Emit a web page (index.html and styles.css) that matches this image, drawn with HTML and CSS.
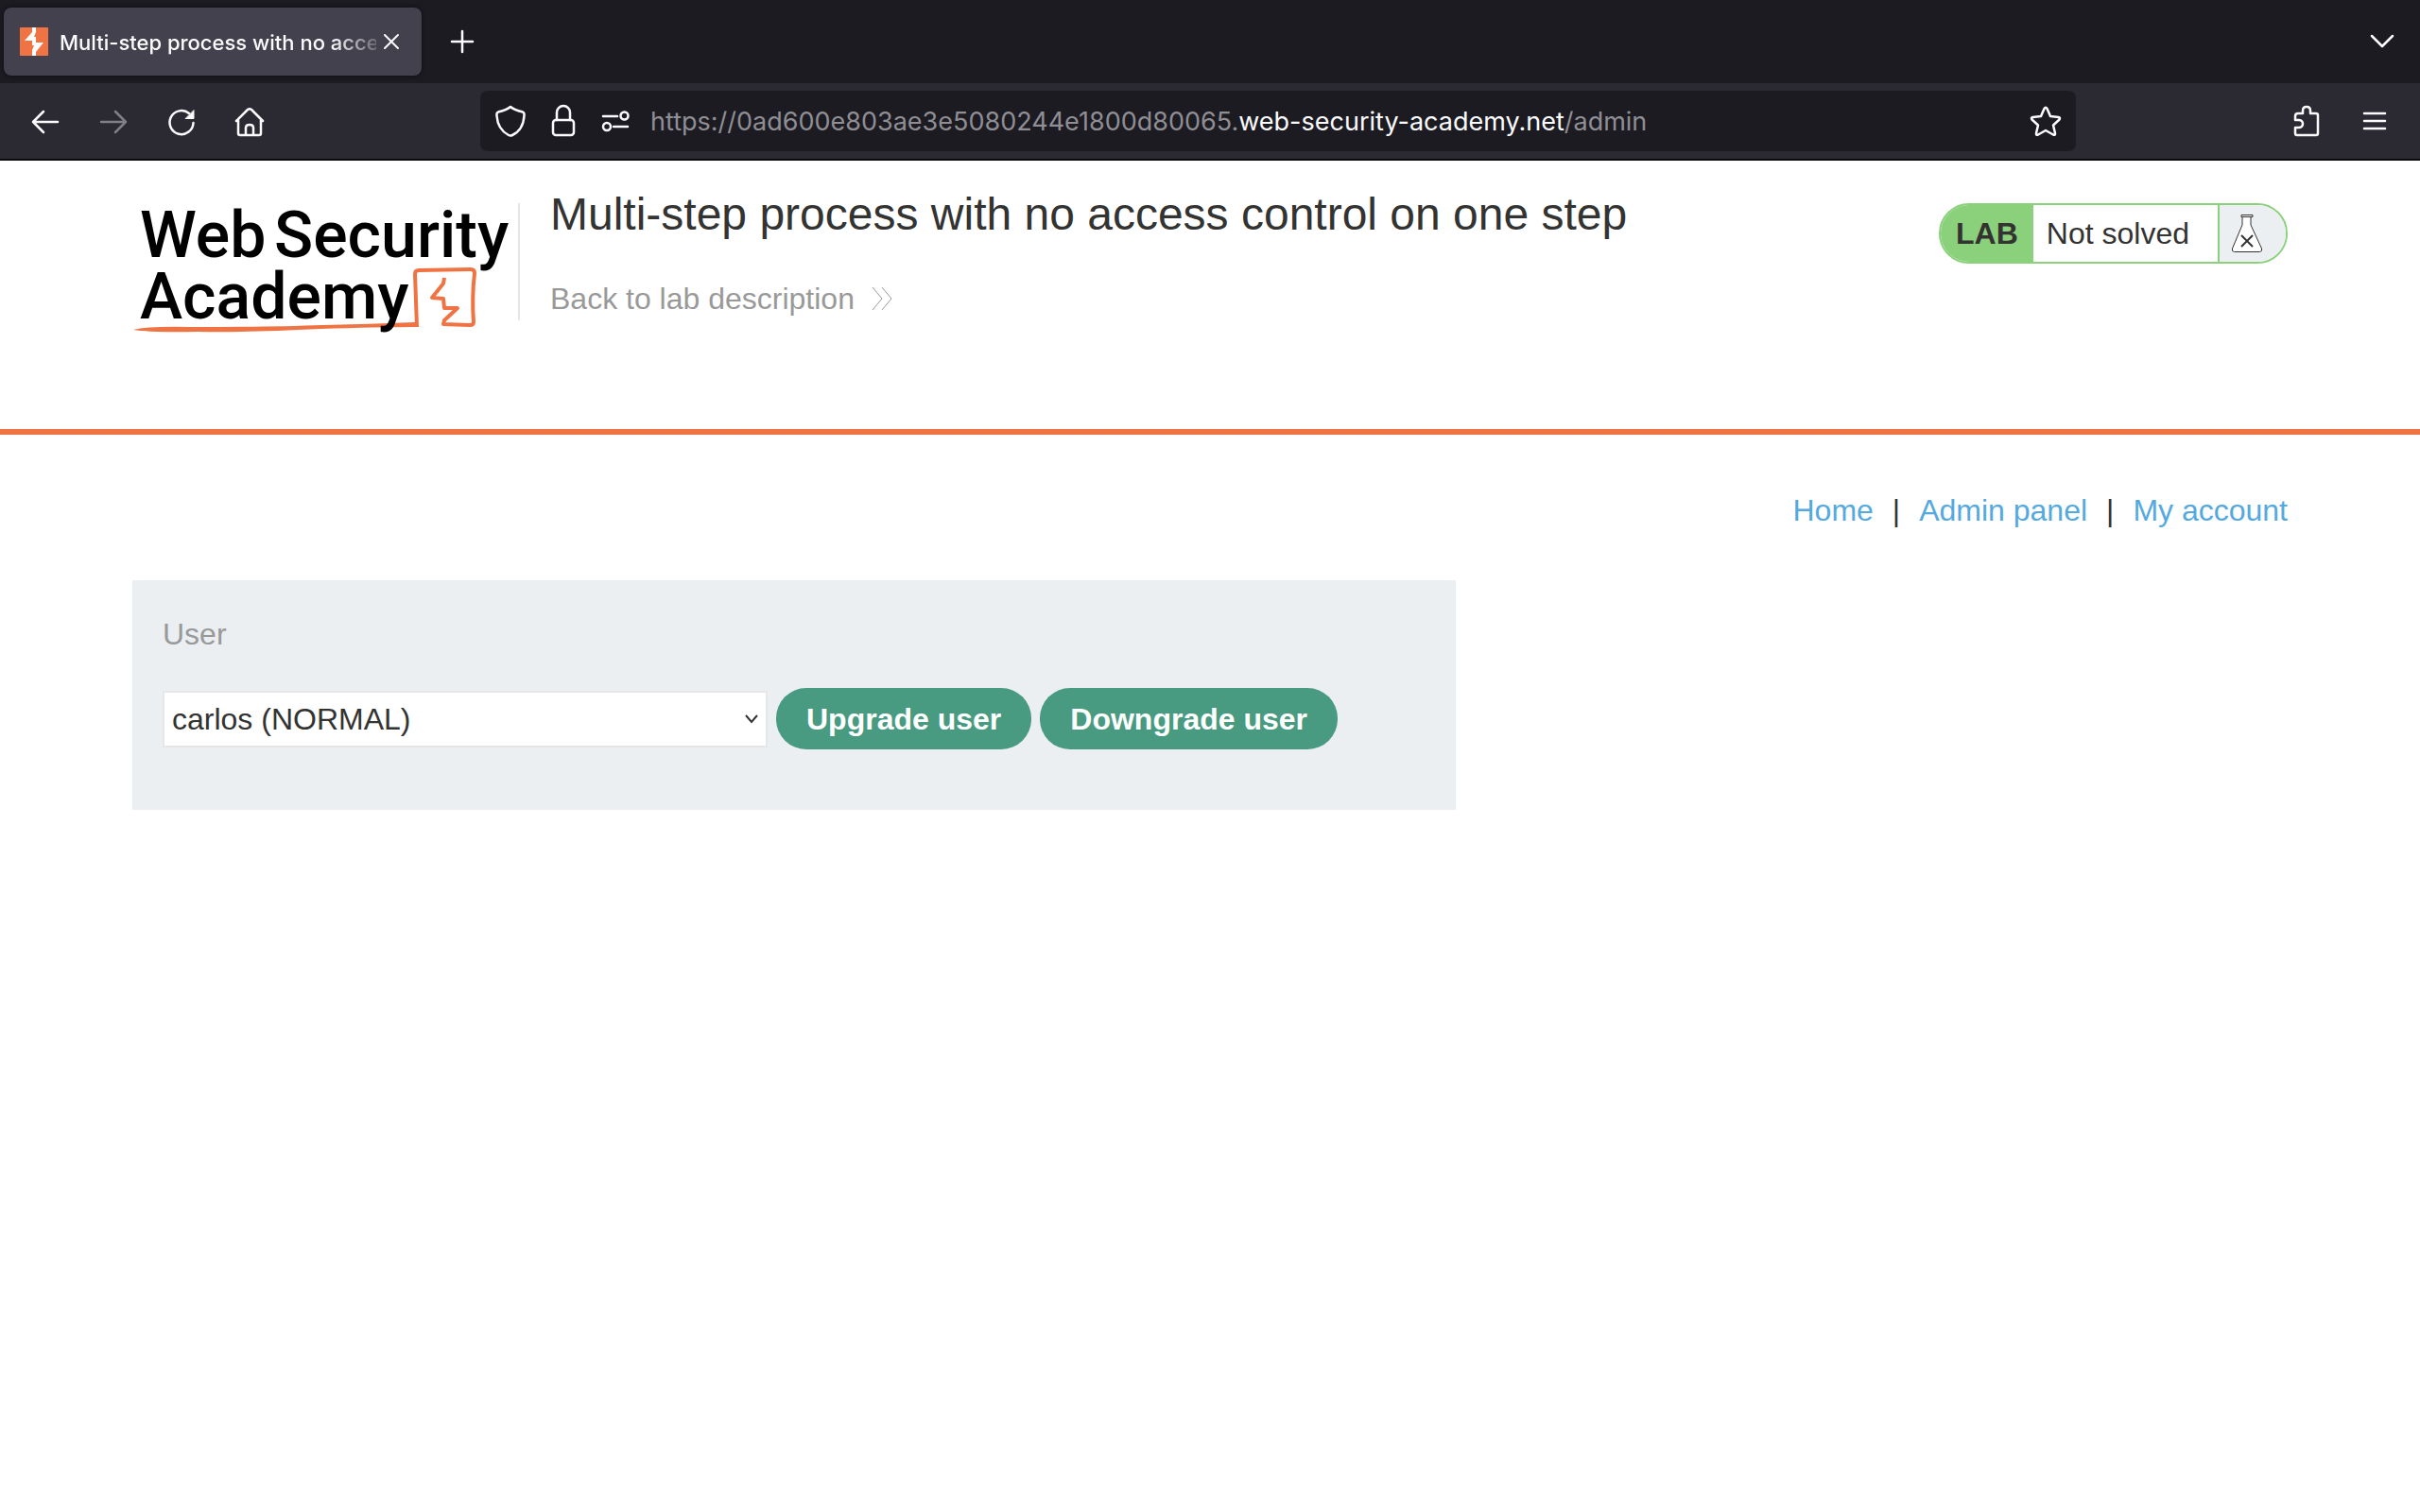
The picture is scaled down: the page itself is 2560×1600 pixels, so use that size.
FILE: index.html
```html
<!DOCTYPE html>
<html lang="en">
<head>
<meta charset="utf-8">
<title>Multi-step process with no access control on one step</title>
<link rel="stylesheet" href="styles.css">
</head>
<body>
<div class="browser">
  <div class="tabs">
    <div class="tab">
      <svg class="favicon" viewBox="0 0 30 30"><rect width="30" height="30" fill="#f07343"/><path d="M13 0h4v5l-2 5h2v6h8l-8 10v4h-4v-6l2-5h-2v-5H5l8-9z" fill="#fff"/></svg>
      <span class="tab-title">Multi-step process with no access control on one step</span>
      <button class="icon-button tab-close" aria-label="Close tab"><svg width="16" height="16" viewBox="0 0 16 16"><path d="M1 1l14 14M15 1L1 15"/></svg></button>
    </div>
    <button class="icon-button" aria-label="New tab"><svg width="24" height="24" viewBox="0 0 24 24"><path d="M12 1v22M1 12h22"/></svg></button>
    <button class="icon-button tab-list" aria-label="List all tabs"><svg width="24" height="14" viewBox="0 0 24 14"><path d="M1 1l11 11L23 1"/></svg></button>
  </div>
  <div class="toolbar">
    <div class="nav-buttons">
      <button class="icon-button" aria-label="Back"><svg width="32" height="32" viewBox="0 0 32 32"><path d="M29 16H3M14 5L3 16l11 11"/></svg></button>
      <button class="icon-button dim" aria-label="Forward"><svg width="32" height="32" viewBox="0 0 32 32"><path d="M3 16h26M18 5l11 11-11 11"/></svg></button>
      <button class="icon-button" aria-label="Reload"><svg width="32" height="32" viewBox="0 0 32 32"><path d="M28.500 17A12.500 12.500 0 1 1 24 7"/><path d="M29 4v8.500h-8.500z" fill="#fbfbfe" stroke-width="1"/></svg></button>
      <button class="icon-button" aria-label="Home"><svg width="32" height="32" viewBox="0 0 32 32"><path d="M2 15L14 3q2-1.500 4 0l12 12M4 13v15q0 2 2 2h20q2 0 2-2V13M12 30V22q0-3 4-3t4 3v8"/></svg></button>
    </div>
    <div class="address">
      <div class="site-icons">
        <button class="icon-button" aria-label="Tracking protection"><svg width="32" height="34" viewBox="0 0 32 34"><path d="M16 2q3 3 13 5.500 2 1 1.500 4-1 15-12.500 20.500-2 1-4 0Q2.500 26 1.500 11.500q-.5-3 1.500-4Q13 5 16 2z"/></svg></button>
        <button class="icon-button" aria-label="Connection secure"><svg width="24" height="34" viewBox="0 0 24 34"><rect x="1" y="16" width="22" height="16" rx="3"/><path d="M5 16V8a7 7 0 0 1 14 0v8"/></svg></button>
        <button class="icon-button" aria-label="Permissions"><svg width="30" height="22" viewBox="0 0 30 22"><path d="M2 6h15M13 17h15"/><circle cx="24.500" cy="5.500" r="4"/><circle cx="6" cy="17" r="4"/></svg></button>
      </div>
      <div class="url" role="textbox" aria-label="Address">https://0ad600e803ae3e5080244e1800d80065.<span class="domain">web-security-academy.net</span>/admin</div>
      <button class="icon-button" aria-label="Bookmark"><svg width="34" height="32" viewBox="0 0 34 32"><path d="M15.500 3q1.500-2.500 3 0l3.500 8 8.500 1q2.500.5 1 2.500l-6.500 6 2 8.500q.2 2.500-2 1.500L17 26l-8 4.500q-2.200 1-2-1.500l2-8.500-6.500-6q-1.500-2 1-2.500l8.500-1z"/></svg></button>
    </div>
    <div class="tools">
      <button class="icon-button" aria-label="Extensions"><svg width="28" height="34" viewBox="0 0 28 34"><path d="M2 16v-4q0-3 3-3h5V6q0-4 4-4t4 4v3h6q2 0 2 2v19q0 2-2 2H4q-2 0-2-2v-6h4q4-.5 4-4t-4-4z"/></svg></button>
      <button class="icon-button" aria-label="Menu"><svg width="26" height="24" viewBox="0 0 26 24"><path d="M2 4h22M2 12h22M2 20h22"/></svg></button>
    </div>
  </div>
</div>

<header class="lab-header">
  <a class="logo" href="#" aria-label="Web Security Academy">
    <svg width="400" height="144" viewBox="0 0 400 144">
      <path d="M1 134q16-4 60-3 90 0 140-2 50-1 98-3v5q-40 0-100 2-80 4-130 3-50 1-68-2z" fill="#f07343"/>
      <path d="M301 131q-1-30-2-56 0-4 4-4l55-1q4 0 4 4-3 26-1 52 0 3-4 3l-28-1 1-4 14-13h-14l-1-10-12-1 12-15 1-6" fill="none" stroke="#f07343" stroke-width="4" stroke-linejoin="round"/>
      <g class="logo-text"><text x="8" y="57">Web</text><text x="150" y="57">Security</text><text x="8" y="122">Academy</text></g>
    </svg>
  </a>
  <div class="lab-title">
    <h1>Multi-step process with no access control on one step</h1>
    <a class="back" href="#">Back to lab description <svg width="22" height="24" viewBox="0 0 22 24"><path d="M1 0l10 12L1 24M11 0l10 12-10 12"/></svg></a>
  </div>
  <div class="status">
    <span class="status-tag">LAB</span>
    <span class="status-text">Not solved</span>
    <span class="status-icon"><svg width="34" height="42" viewBox="0 0 34 42"><path d="M12 3v9L1.500 37q-1 3 2 3.500h27q3-.5 2-3.500L21 12V3z" fill="#fff"/><path d="M11 1.500h12v2H11z" fill="#fff"/><path d="M11 23l12 12M23 23L11 35" stroke-width="2"/></svg></span>
  </div>
</header>

<main class="content">
  <nav class="links"><a href="#">Home</a><span>|</span><a href="#">Admin panel</a><span>|</span><a href="#">My account</a></nav>
  <form class="panel">
    <label for="user">User</label>
    <div class="controls">
      <div class="select">
        <select id="user"><option>carlos (NORMAL)</option></select>
        <svg width="14" height="10" viewBox="0 0 14 10"><path d="M1 1l6 7 6-7"/></svg>
      </div>
      <button class="action" type="button">Upgrade user</button>
      <button class="action" type="button">Downgrade user</button>
    </div>
  </form>
</main>
</body>
</html>
```
FILE: styles.css
```css
* { box-sizing: border-box; }

body {
  margin: 0;
  background: #fff;
  color: #333332;
  font: 32px/40px "Liberation Sans", Arial, sans-serif;
}

svg { display: block; flex: none; }

a { text-decoration: none; }

/* Browser chrome */
.browser {
  border-bottom: 2px solid #0c0c0d;
  background: #2b2a33;
  color: #fbfbfe;
  font-family: Inter, sans-serif;
}

.tabs {
  display: flex;
  align-items: center;
  gap: 31px;
  height: 88px;
  padding: 0 28px 0 4px;
  background: #1c1b22;
}

.tab {
  display: flex;
  align-items: center;
  width: 442px;
  height: 72px;
  padding: 0 24px 0 17px;
  border-radius: 8px;
  background: #42414d;
  box-shadow: 0 0 4px #0c0c0d;
}

.favicon { width: 30px; height: 30px; margin-right: 12px; }

.tab-title {
  flex: 1;
  padding-top: 2px;
  overflow: hidden;
  white-space: nowrap;
  font-size: 22px;
  font-weight: 500;
  mask-image: linear-gradient(to right, #000 86%, transparent 104%);
}

.tab-close { margin-left: 8px; }

.tab-list { margin-left: auto; }

.icon-button {
  padding: 0;
  border: 0;
  background: none;
  color: inherit;
}

.icon-button svg {
  fill: none;
  stroke: currentColor;
  stroke-width: 2.500;
  stroke-linecap: round;
  stroke-linejoin: round;
  overflow: visible;
}

.tab-close svg { stroke-width: 2; }

.dim { color: #807f86; }

.toolbar {
  display: flex;
  align-items: center;
  height: 80px;
  padding: 0 35px 0 32px;
}

.nav-buttons { display: flex; gap: 40px; padding-top: 2px; }

.address {
  display: flex;
  flex: 1;
  align-items: center;
  gap: 22px;
  height: 64px;
  margin: 0 230px 0 228px;
  padding: 0 15px 0 16px;
  border-radius: 8px;
  background: #1c1b22;
}

.site-icons { display: flex; align-items: center; gap: 28px; }

.url {
  flex: 1;
  padding-top: 2px;
  overflow: hidden;
  white-space: nowrap;
  color: #8f8e94;
  font-size: 27px;
}

.domain { color: #fbfbfe; }

.tools { display: flex; align-items: center; gap: 45px; }

/* Lab header */
.lab-header {
  display: flex;
  align-items: flex-start;
  min-height: 290px;
  padding: 29px 140px 0;
  border-bottom: 6px solid #f07343;
}

.logo {
  height: 124px;
  margin-top: 16px;
  padding-right: 8px;
  border-right: 2px solid #e6e6e6;
}

.logo-text {
  fill: #000;
  font: 500 68px Roboto, sans-serif;
}

.lab-title { flex: 1; padding-left: 32px; }

h1 {
  margin: 0;
  font-size: 48px;
  font-weight: 400;
  line-height: 56px;
}

.back {
  display: flex;
  align-items: center;
  gap: 18px;
  margin-top: 41px;
  color: #999;
}

.back svg { fill: none; stroke: #999; stroke-width: 1; }

.status {
  display: flex;
  align-items: stretch;
  height: 64px;
  margin-top: 16px;
  overflow: hidden;
  border: 2px solid #8bd17c;
  border-radius: 32px;
  line-height: 60px;
}

.status-tag {
  padding: 0 16px;
  background: #8bd17c;
  font-weight: 700;
}

.status-text { padding: 0 30px 0 14px; }

.status-icon {
  display: flex;
  align-items: center;
  padding: 0 24px 0 12px;
  border-left: 2px solid #8bd17c;
  background: #ebeff2;
}

.status-icon svg { fill: none; stroke: #333332; stroke-width: 1; }

/* Page content */
.content { padding: 60px 140px; }

.links {
  display: flex;
  justify-content: flex-end;
  gap: 20px;
}

.links a { color: #54a9df; }

.panel {
  max-width: 1400px;
  margin-top: 54px;
  padding: 37px 32px 64px;
  background: #ebeff2;
}

.panel label { display: block; color: #999; }

.controls {
  display: flex;
  align-items: center;
  gap: 9px;
  margin-top: 37px;
}

.select { display: grid; align-items: center; width: 640px; }

.select select,
.select svg { grid-area: 1 / 1; }

.select select {
  width: 100%;
  height: 60px;
  padding: 0 8px;
  border: 2px solid #e6e6e6;
  border-radius: 0;
  appearance: none;
  background: #fff;
  color: #333332;
  font: inherit;
}

.select svg {
  justify-self: end;
  margin-right: 10px;
  fill: none;
  stroke: #333332;
  stroke-width: 2;
  pointer-events: none;
}

.action {
  height: 65px;
  padding: 2px 32px 0;
  border: 0;
  border-radius: 32px;
  background: #489a80;
  color: #fff;
  font: bold 32px "Liberation Sans", Arial, sans-serif;
}
```
